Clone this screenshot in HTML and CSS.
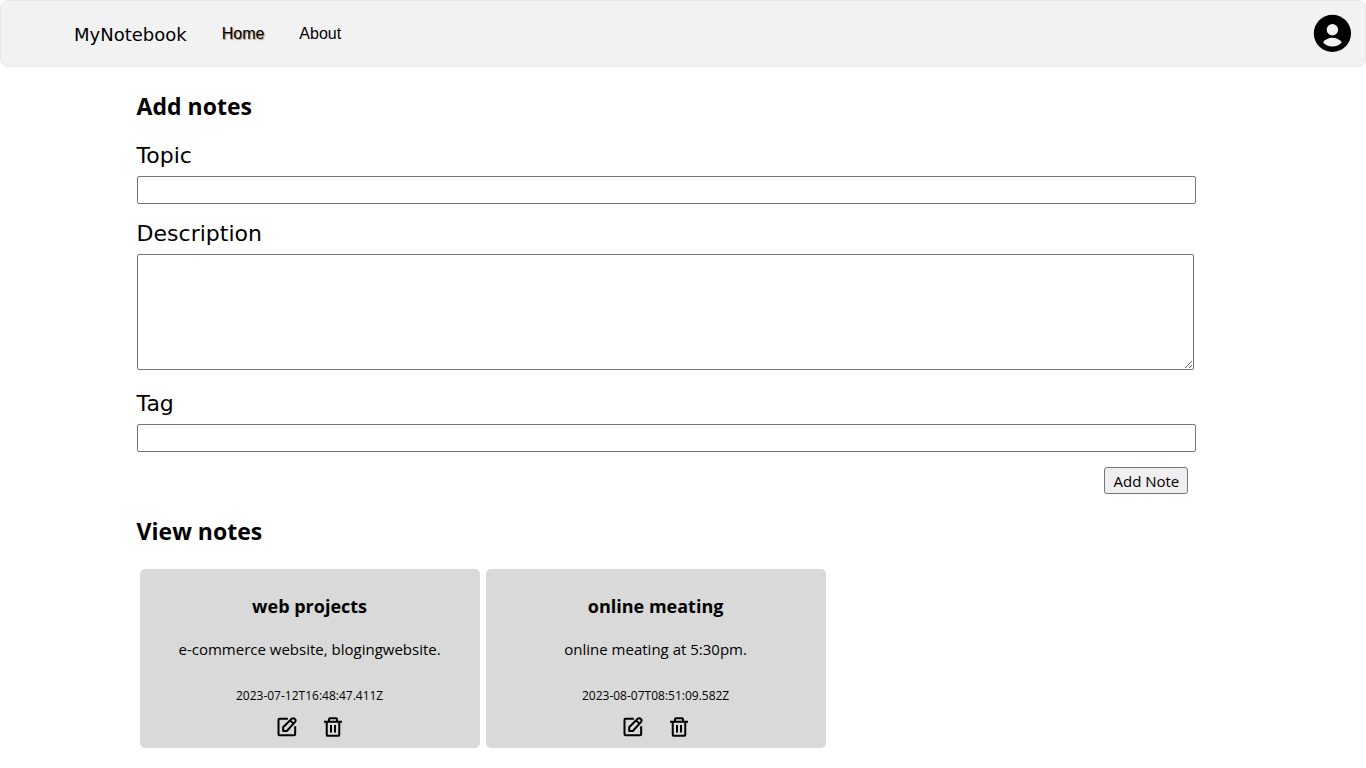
FILE: index.html
```html
<!DOCTYPE html>
<html lang="en">
<head>
<meta charset="utf-8">
<meta name="viewport" content="width=device-width, initial-scale=1">
<title>MyNotebook</title>
<link rel="stylesheet" href="styles.css">
</head>
<body>
<svg class="sprite" aria-hidden="true">
  <symbol id="edit" viewBox="0 0 24 24"><path fill="none" stroke="currentColor" stroke-width="2.400" stroke-linejoin="round" d="M13 2.200H3q-1.200 0-1.200 1.200v17.400q0 1.200 1.200 1.200h17.600q1.200 0 1.200-1.200V11M7.400 16.800v-4.600L17.600 2.200q2-1.600 3.800.1t.1 3.800L11.800 16.800zM16 4.400l3.600 3.600"/></symbol>
  <symbol id="trash" viewBox="0 0 24 24"><path fill="none" stroke="currentColor" stroke-width="2.400" stroke-linejoin="round" d="M1.200 5.800h21.600M7.200 5.600V2.800q0-1.200 1.200-1.200h7.200q1.200 0 1.200 1.200v2.800M4.500 5.800v15.400q0 1.400 1.400 1.400h12.200q1.400 0 1.400-1.400V5.800M9.600 9.600v9M14.400 9.600v9"/></symbol>
</svg>
<header class="navbar">
  <nav class="nav">
    <a class="brand" href="#">MyNotebook</a>
    <a class="link active" href="#">Home</a>
    <a class="link" href="#">About</a>
  </nav>
  <button class="account" type="button" aria-label="Account">
    <svg viewBox="0 0 38 38" width="38" height="38"><circle cx="19.400" cy="19.400" r="18.600"/><circle cx="19.400" cy="15.700" r="5.700" fill="#f2f2f2"/><path fill="#f2f2f2" d="M10 28.300q3.700-4.600 9.400-4.600t9.400 4.600q-3.700 4.300-9.400 4.300t-9.400-4.300z"/></svg>
  </button>
</header>
<main class="page">
  <h2 class="title">Add notes</h2>
  <form class="form">
    <label class="label" for="topic">Topic</label>
    <input class="field" id="topic" type="text">
    <label class="label" for="description">Description</label>
    <textarea class="field area" id="description"></textarea>
    <label class="label" for="tag">Tag</label>
    <input class="field" id="tag" type="text">
    <button class="submit" type="submit">Add Note</button>
  </form>
  <h2 class="title">View notes</h2>
  <section class="notes">
    <article class="card">
      <h3 class="topic">web projects</h3>
      <p class="text">e-commerce website, blogingwebsite.</p>
      <time class="date">2023-07-12T16:48:47.411Z</time>
      <div class="actions">
        <button class="action" type="button" aria-label="Edit note"><svg class="icon"><use href="#edit"/></svg></button>
        <button class="action" type="button" aria-label="Delete note"><svg class="icon"><use href="#trash"/></svg></button>
      </div>
    </article>
    <article class="card">
      <h3 class="topic">online meating</h3>
      <p class="text">online meating at 5:30pm.</p>
      <time class="date">2023-08-07T08:51:09.582Z</time>
      <div class="actions">
        <button class="action" type="button" aria-label="Edit note"><svg class="icon"><use href="#edit"/></svg></button>
        <button class="action" type="button" aria-label="Delete note"><svg class="icon"><use href="#trash"/></svg></button>
      </div>
    </article>
  </section>
</main>
</body>
</html>
```
FILE: styles.css
```css
* { box-sizing: border-box; }
body { margin: 0; background: #fff; color: #000; font-family: "Segoe UI", "Open Sans", "Noto Sans", sans-serif; font-size: 15px; }
.sprite { display: none; }
.navbar { display: flex; justify-content: space-between; align-items: center; padding: 13px 14px 14px 73px; border: 1px solid #e7e7e7; border-radius: 8px; background: #f2f2f2; }
.nav { display: flex; align-items: center; gap: 35px; padding-top: 2px; }
.nav a { color: #000; text-decoration: none; }
.brand { padding-top: 2px; font: 18px/24px Verdana, "DejaVu Sans", sans-serif; }
.link { font: 16px/24px Arial, "Liberation Sans", sans-serif; }
.active { text-shadow: 1px 1px 1px #a08070; }
.account, .action { display: block; padding: 0; border: 0; background: none; color: #000; cursor: pointer; }
.account svg { display: block; }
.page { width: 80%; margin: 0 auto; }
.title { margin: 0; padding-top: 23px; font-size: 23px; line-height: 32px; }
.form { display: flex; flex-direction: column; padding: 1px 33px 0 0; }
.label { margin-top: 17px; font: 22px/32px Verdana, "DejaVu Sans", sans-serif; }
.field { width: 100%; height: 28px; margin-top: 4px; padding: 2px 4px; border: 1px solid #767676; border-radius: 2px; background: #fff; font: inherit; }
.field + .label { margin-top: 14px; }
.area { width: calc(100% - 2px); height: 116px; resize: both; }
.area + .label { margin-top: 18px; }
.submit { align-self: flex-end; margin: 15px 8px 0 0; width: 84px; height: 27px; padding: 0; border: 1px solid #767676; border-radius: 3px; background: #efefef; color: #000; font: inherit; line-height: 24px; }
.form + .title { padding-top: 21px; }
.notes { display: flex; flex-wrap: wrap; gap: 6px; padding: 22px 3px; }
.card { display: flex; flex-direction: column; align-items: center; width: 340px; padding: 25px 16px 11px; border-radius: 5px; background: #d9d9d9; text-align: center; }
.topic { margin: 0; font-size: 18px; line-height: 24px; }
.text { margin: 19px 0 27px; line-height: 24px; }
.date { font-size: 12px; line-height: 16px; }
.actions { display: flex; gap: 26px; margin-top: 13px; }
.icon { display: block; width: 20px; height: 20px; }
```
